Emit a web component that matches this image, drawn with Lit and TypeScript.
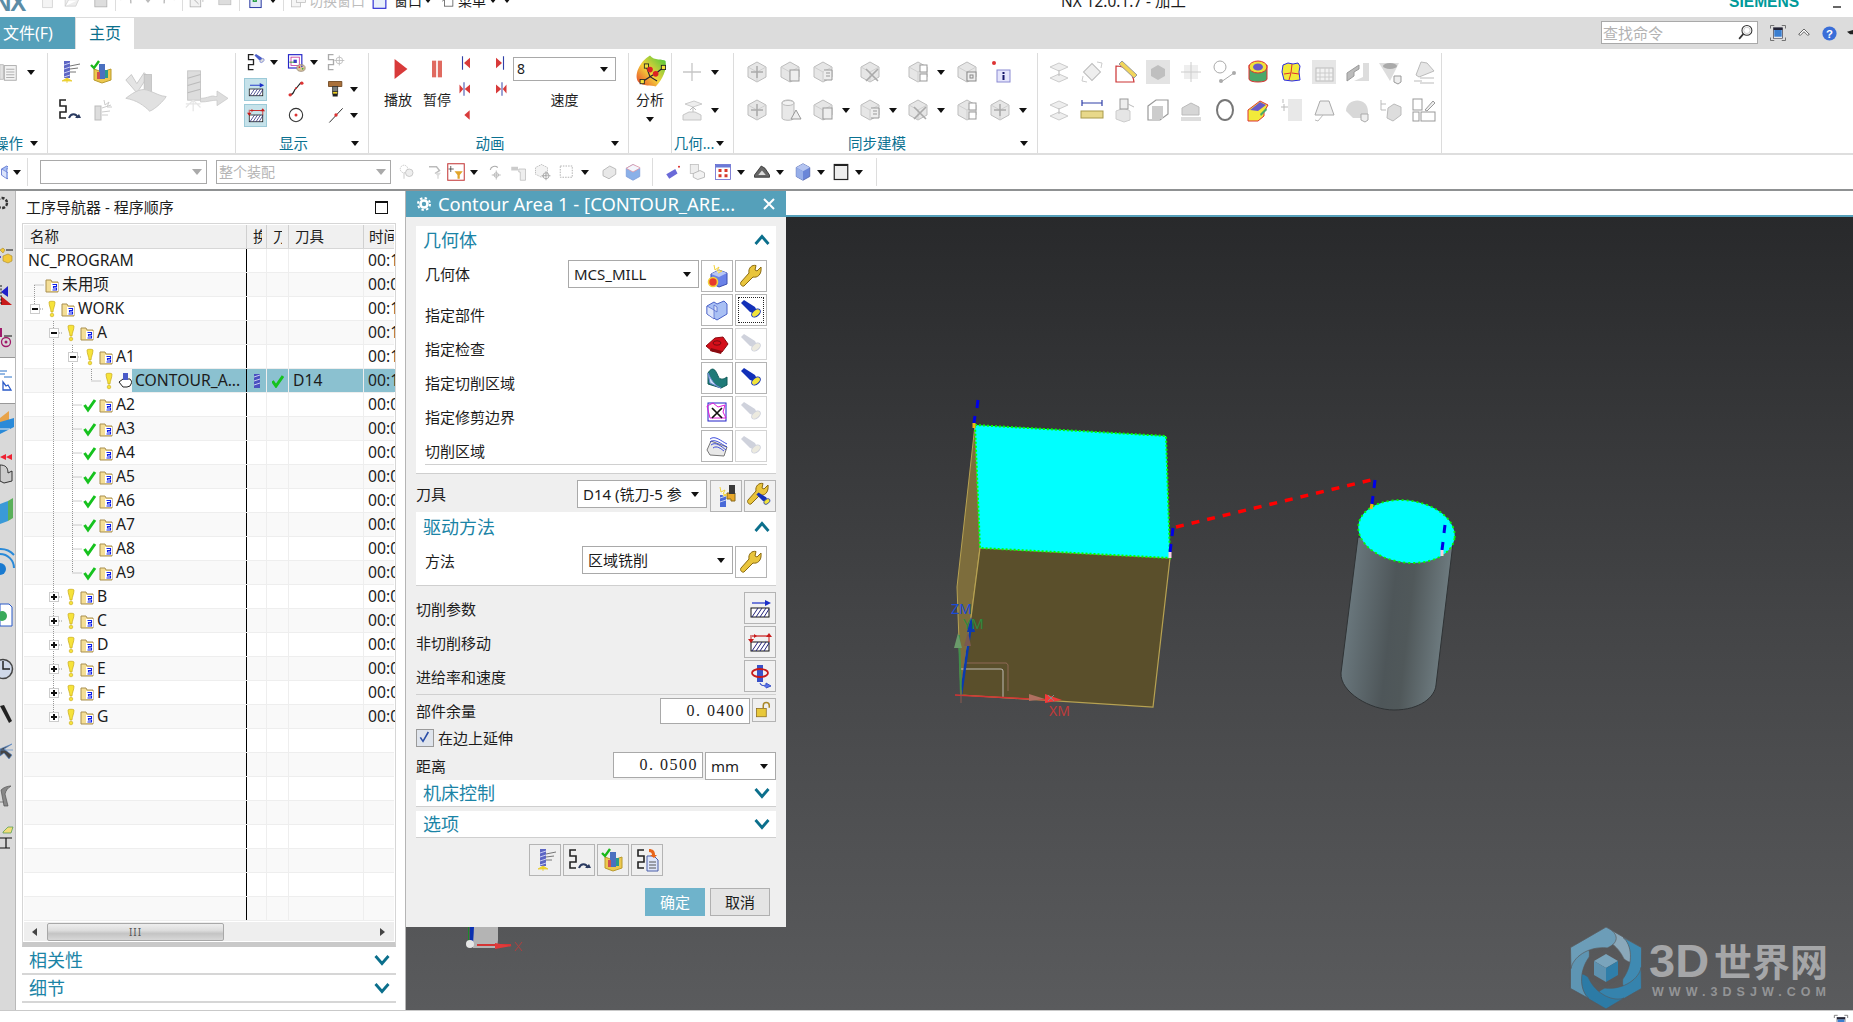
import { LitElement, html, css, svg } from "lit";
import { customElement } from "lit/decorators.js";

const cubeF = (extra: any = "") => svg`<path d="M12 2l9 5v10l-9 5-9-5V7z" fill="#e6e6e6" stroke="#bdbdbd"/><path d="M3 7l9 5 9-5M12 12v10" fill="none" stroke="#cfcfcf"/>${extra}`;
const sPath = (c = "#222") => svg`<path d="M9 2H3v6h6v6H3v6h6" fill="none" stroke="${c}" stroke-width="1.6"/>`;
const hatch = svg`<rect x="3" y="12" width="18" height="9" fill="#fff" stroke="#111"/><path d="M4 21l6-9M8 21l6-9M12 21l6-9M16 21l5-8" stroke="#23237a"/>`;
const torch = (a = "#1230b8", b = "#f1e33a") => svg`<path d="M2 5l3-3 11 7 4 8-9-3z" fill="${a}"/><ellipse cx="17" cy="15" rx="5" ry="3.2" transform="rotate(-40 17 15)" fill="${b}" stroke="${a}"/>`;
const wrench = (c = "#e9c53c") => svg`<path d="M22 3l-4 4-2-1 1-4.500C13 .5 9 4 10 9L2 18c-1.500 2 1 5 3 4l9-9c4 1 9-2 8-10z" fill="${c}" stroke="#8a6a12"/>`;
const folder = svg`<path d="M1 3h5l1 2h6v10H1z" fill="#f4de97" stroke="#a98f4e"/><rect x="6" y="6" width="7" height="8" fill="#fff"/><path d="M7.500 7.500h4v2h-3V11h3v2h-4" fill="none" stroke="#1020e8" stroke-width="1.100"/>`;
const millB = svg`<rect x="7" y="1" width="6" height="17" fill="#5d66c4"/><path d="M7 5l6-2M7 9l6-2M7 13l6-2M7 17l6-2" stroke="#c9cdf2"/><path d="M13 6l10-2M13 9l8-1M13 12l6 0" stroke="#777"/><path d="M10 18l-5 3h10zM10 23v-5" fill="#f2dd3a" stroke="#e7c61f" stroke-width=".7"/>`;
const verify = svg`<path d="M4 9l8 3 9-3v11l-9 3-8-3z" fill="#edc84e" stroke="#b99a2d"/><rect x="9" y="4" width="6" height="15" fill="#4a70c0"/><rect x="15" y="10" width="3" height="8" fill="#2a9a8a"/><rect x="7" y="12" width="3" height="7" fill="#d05050"/><path d="M1 5l3 3 5-7" fill="none" stroke="#1ab81a" stroke-width="2.400"/>`;

const I: Record<string, any> = {
  doc: svg`<path d="M3 4h4v16H3z" fill="#e2e2e2" stroke="#bbb"/><rect x="8" y="5" width="13" height="16" fill="#f3f3f3" stroke="#aaa"/><path d="M10 9h9M10 12h9M10 15h9M10 18h9" stroke="#aaa"/>`,
  mill: millB,
  verify,
  spath: svg`${sPath()}<path d="M12 20c2-5 7-5 9 0" fill="none" stroke="#2a3a60" stroke-width="2"/><path d="M18 20h6l-2-4z" fill="#2a3a60"/>`,
  sparkF: svg`<rect x="5" y="8" width="6" height="14" fill="#ddd" stroke="#bbb"/><path d="M12 10l9-3M12 14l8-1M12 17h6M14 2l1 5 4-3-2 5 5 0" stroke="#ccc" fill="none"/>`,
  bigCheck: svg`<path d="M1 6l3-3 3 5 4-6 2 2-6 9z" fill="#e4e4e4" stroke="#c6c6c6" stroke-width=".5"/><rect x="11" y="3" width="4" height="11" fill="#cfcfcf" stroke="#bbb" stroke-width=".4"/><path d="M1 16c5-4 9-6 13-4 3 1 6 3 9 3-1 2-6 7-9 8-3-3-7-6-13-7z" fill="#e1e1e1" stroke="#c9c9c9" stroke-width=".5"/>`,
  bigMill: svg`<rect x="2" y="1" width="7" height="16" fill="#ddd" stroke="#c4c4c4" stroke-width=".5"/><path d="M2 5l7-2M2 9l7-2M2 13l7-2" stroke="#bbb" stroke-width=".6"/><path d="M9 16c4 0 6-2 8-1h1v-3l6 4-6 4v-3c-3 0-5 1-9 1z" fill="#dedede" stroke="#c8c8c8" stroke-width=".4"/><path d="M5 17l-4 4M5 17l4 4M5 17v6M1 19l8 0" stroke="#e6e6e6" stroke-width=".7"/>`,
  storch: svg`${sPath()}<g transform="translate(9 0) scale(.6)">${torch("#4a5dc8", "#ddd")}</g>`,
  colorsq: svg`<rect x="3" y="2" width="16" height="16" fill="#fff" stroke="#2626c8" stroke-width="1.400"/><rect x="6" y="5" width="10" height="10" fill="#fff" stroke="#c83a9a"/><rect x="9" y="8" width="4" height="4" fill="#3a3ac8"/><path d="M4 11h6" stroke="#1a9a1a"/><ellipse cx="18" cy="18" rx="5" ry="4" fill="#d8c49a" stroke="#987"/><circle cx="16" cy="17" r="1" fill="#d33"/><circle cx="19" cy="16" r="1" fill="#33c"/><circle cx="20" cy="19" r="1" fill="#3a3"/>`,
  sF: svg`${sPath("#aaa")}<circle cx="16" cy="9" r="4" fill="none" stroke="#bbb"/><path d="M16 3v12M10 9h12" stroke="#bbb"/>`,
  cut: svg`${hatch}<path d="M4 7h14" stroke="#1a2ec8" stroke-width="1.200"/><path d="M23 7l-6-3v6z" fill="#1a2ec8"/>`,
  noncut: svg`${hatch}<path d="M4 6h16" stroke="#c81a1a" stroke-width="1.200"/><path d="M3 5v7M21 5v7" stroke="#c81a1a"/><path d="M0 9h6l-3 4zM18 7h6l-3-4zM9 6l-3-2v4z" fill="#c81a1a"/>`,
  curve: svg`<path d="M5 19c5 0 4-6 7-8s4-6 7-7" fill="none" stroke="#222" stroke-width="1.400"/><circle cx="5" cy="19" r="2" fill="#d33"/><circle cx="19" cy="5" r="2" fill="#d33"/><circle cx="12" cy="11" r="1.200" fill="#d33"/>`,
  holder: svg`<path d="M3 3h16v6H3z" fill="#a9703a" stroke="#6a421c"/><rect x="8" y="9" width="6" height="6" fill="#7a7f7f" stroke="#333"/><rect x="8" y="15" width="6" height="3" fill="#f0d21f" stroke="#333"/><rect x="8" y="18" width="6" height="3" fill="#222"/>`,
  circle: svg`<circle cx="12" cy="12" r="8" fill="none" stroke="#333" stroke-width="1.300"/><circle cx="12" cy="12" r="1.800" fill="#d33"/>`,
  line: svg`<path d="M4 21L20 4" stroke="#333" stroke-width="1.200"/><circle cx="12" cy="12" r="2" fill="#d33"/>`,
  play: svg`<path d="M5 1l14 11-14 11z" fill="#d83a3a"/>`,
  pause: svg`<rect x="6" y="2" width="5" height="20" fill="#e06a60"/><rect x="13" y="2" width="5" height="20" fill="#e06a60"/>`,
  first: svg`<path d="M6 3v18" stroke="#3040a8" stroke-width="1.500"/><path d="M8 12l8-7v14z" fill="#d83a3a"/>`,
  last: svg`<path d="M18 3v18" stroke="#3040a8" stroke-width="1.500"/><path d="M16 12L8 5v14z" fill="#d83a3a"/>`,
  stepb: svg`<path d="M8 3v18" stroke="#3040a8" stroke-width="1.300"/><path d="M7 12l-5-6v12zM9 12l7-6v12z" fill="#d83a3a"/>`,
  stepf: svg`<path d="M16 3v18" stroke="#3040a8" stroke-width="1.300"/><path d="M17 12l5-6v12zM15 12L8 6v12z" fill="#d83a3a"/>`,
  back: svg`<path d="M8 12l8-7v14z" fill="#d83a3a"/>`,
  analysis: svg`<defs><linearGradient id="an" x1="0" y1="1" x2="1" y2="0"><stop offset="0" stop-color="#e83a2a"/><stop offset=".45" stop-color="#f4d23a"/><stop offset="1" stop-color="#3ac83a"/></linearGradient></defs><path d="M12 1c3 4 9 2 11 4 1 6-2 13-7 18-3-1-9 0-12-3C0 15 5 5 12 1z" fill="url(#an)"/><path d="M9 8l3 8 5 3M12 16l5-3 5-4M12 16l-6 4" fill="none" stroke="#223" stroke-width=".8"/><g fill="#f2e23a" stroke="#222" stroke-width=".6"><rect x="8" y="7" width="3" height="3"/><rect x="5" y="18" width="3" height="3"/><rect x="20" y="8" width="3" height="3"/></g><circle cx="12" cy="11" r="2" fill="#d22"/><circle cx="16" cy="14" r="2" fill="#d22"/>`,
  plusF: svg`<path d="M12 3v18M3 12h18" stroke="#c6c6c6" stroke-width="1.300"/>`,
  extrudeF: svg`<path d="M5 6l9-3 8 3-9 3z" fill="#eee" stroke="#ccc"/><path d="M13 17V9m-3 3l3-3 3 3" fill="none" stroke="#bbb"/><path d="M3 17l6-3h6l6 3v5H3z" fill="#e8e8e8" stroke="#c6c6c6"/>`,
  c1: cubeF(svg`<path d="M12 6v12M6 12h12" stroke="#aaa" stroke-width="1.500"/>`),
  c2: cubeF(svg`<rect x="12" y="10" width="9" height="11" fill="#eee" stroke="#999"/>`),
  c3: cubeF(svg`<path d="M13 10h8v10h-8" fill="#eee" stroke="#999"/><path d="M15 13h4M15 16h4" stroke="#999"/>`),
  c4: cubeF(svg`<path d="M8 9l12 12M20 9L8 21" stroke="#aaa" stroke-width="1.600"/>`),
  c5: cubeF(svg`<rect x="14" y="5" width="7" height="7" fill="#fff" stroke="#999"/><rect x="14" y="14" width="7" height="7" fill="#fff" stroke="#999"/>`),
  c6: cubeF(svg`<rect x="12" y="12" width="9" height="9" fill="#eee" stroke="#888"/><rect x="15" y="15" width="3" height="3" fill="none" stroke="#888"/>`),
  info: svg`<circle cx="6" cy="3" r="2" fill="#d33"/><rect x="9" y="10" width="13" height="12" fill="#e4e4fb" stroke="#8a8ad2"/><rect x="14.500" y="12" width="2" height="2" fill="#15156a"/><rect x="14.500" y="15" width="2" height="5" fill="#15156a"/>`,
  cylF: svg`<path d="M4 5c0-4 12-4 12 0v15c0 3-12 3-12 0z" fill="#e8e8e8" stroke="#bbb"/><ellipse cx="10" cy="5" rx="6" ry="2.500" fill="#f2f2f2" stroke="#bbb"/><path d="M18 12l5 9h-10z" fill="#eee" stroke="#999"/>`,
  planeF: svg`<path d="M3 7l9-4 9 4-9 4z" fill="#eee" stroke="#ccc"/><path d="M3 18l9-4 9 4-9 4z" fill="#eee" stroke="#ccc"/><path d="M12 10v6" stroke="#bbb"/>`,
  diaF: svg`<rect x="6" y="6" width="12" height="12" fill="#eee" stroke="#bbb" transform="rotate(45 12 12)"/><path d="M17 2l5 1-1 5M7 22l-5-1 1-5" fill="none" stroke="#ccc"/>`,
  ruler: svg`<path d="M3 22V6c9 0 17 7 18 16z" fill="none" stroke="#cc3333" stroke-width="1.200"/><path d="M9 1l15 14-3 3L6 4z" fill="#f1d55a" stroke="#999"/>`,
  boxG: svg`<rect width="24" height="24" fill="#e3e3e3"/><path d="M12 5l7 4v7l-7 4-7-4V9z" fill="#bfbfbf"/>`,
  crossF: svg`<rect x="5" y="5" width="14" height="14" fill="#eee"/><path d="M12 2v20M2 12h20" stroke="#ccc"/>`,
  circL: svg`<circle cx="7" cy="7" r="6" fill="none" stroke="#aaa"/><path d="M8 22l13-9" stroke="#aaa"/><circle cx="8" cy="21" r="2" fill="#aaa"/><circle cx="21" cy="13" r="2" fill="#aaa"/>`,
  ring: svg`<ellipse cx="12" cy="12" rx="8" ry="10" fill="none" stroke="#777" stroke-width="2"/>`,
  rule2: svg`<path d="M2 5h20M2 2v6M22 2v6" stroke="#3040a8" stroke-width="1.200"/><rect x="1" y="13" width="22" height="7" fill="#e8d88a" stroke="#a99a4a"/>`,
  infoF: svg`<path d="M3 13l8-3 6 3v9l-6 2-8-3z" fill="#e5e5e5" stroke="#ccc"/><rect x="7" y="1" width="8" height="10" fill="#eee" stroke="#999"/><path d="M15 6l6 3" stroke="#bbb"/>`,
  wire: svg`<path d="M2 8l8-6h12v14l-8 6H2z" fill="none" stroke="#999" stroke-width="1.200"/><rect x="6" y="8" width="11" height="13" fill="#ccc"/>`,
  dimF: svg`<path d="M3 10l9-5 8 4v8H3z" fill="#d6d6d6" stroke="#bbb"/><rect x="2" y="19" width="20" height="4" fill="#ddd"/>`,
  cyl: svg`<path d="M3 5v14c0 4 18 4 18 0V5z" fill="#4aa86a" stroke="#d33"/><ellipse cx="12" cy="7" rx="9" ry="6" fill="#f0e23a" stroke="#d33"/><ellipse cx="12" cy="7" rx="5" ry="3.500" fill="#6a5ac8"/>`,
  yellowP: svg`<path d="M4 5l5-2 5 1 5-1 2 3-1 6 1 8-8 1-8-1-2-8z" fill="#f2ea3a" stroke="#2a2ae0"/><path d="M5 14l7-1 1-9M13 13l7 1M12 13l-2 7" fill="none" stroke="#d33"/>`,
  stepC: svg`<path d="M2 12l12-9 8 4-4 7v4l-6 5H2z" fill="#f2ea3a" stroke="#d33"/><path d="M4 12l10-8 6 3-8 6z" fill="#6a5ac8"/><path d="M14 16l6-6 1 2-6 6z" fill="#4aa86a"/>`,
  tableF: svg`<rect width="24" height="24" fill="#e6e6e6"/><rect x="4" y="8" width="17" height="13" fill="#f2f2f2" stroke="#bbb"/><path d="M8 8v13M13 8v13M17 8v13M4 13h17M4 17h17" stroke="#ccc"/>`,
  stairF: svg`<path d="M2 13l12-8v4l-5 3v4l-7 5z" fill="#bbb" stroke="#999"/><path d="M9 21l9-4V3h6v18z" fill="#ddd"/>`,
  funnelF: svg`<path d="M1 3h20l-9 18z" fill="#ddd"/><ellipse cx="12" cy="6" rx="7" ry="3" fill="#aaa"/><path d="M16 16h7v6l-3 2-4-2z" fill="#eee" stroke="#999"/>`,
  lampF: svg`<path d="M4 15L9 2l6 1 7 8-15 6z" fill="#e6e6e6" stroke="#bbb"/><path d="M2 21h8M8 18h14M8 23h14" stroke="#bbb"/>`,
  machF: svg`<rect x="9" y="1" width="14" height="22" fill="#e8e8e8"/><path d="M2 9h7M5 6v7M4 1v4" stroke="#bbb"/>`,
  trapF: svg`<path d="M8 3h9l5 14H3z" fill="#eee" stroke="#aaa"/><path d="M3 22l3 1 5-6" fill="none" stroke="#bbb"/>`,
  domeF: svg`<path d="M1 13C1 0 23-2 23 14v6H8z" fill="#d8d8d8"/><path d="M16 16h7v6l-3 2-4-2z" fill="#eee" stroke="#aaa"/>`,
  treeF: svg`<path d="M3 2v10M3 6h5M3 12h5" stroke="#bbb" fill="none"/><path d="M10 10l6-4 7 3v8l-8 6-6-3z" fill="#ddd" stroke="#bbb"/>`,
  layoutF: svg`<rect x="1" y="1" width="9" height="11" fill="#fff" stroke="#999"/><rect x="1" y="14" width="6" height="9" fill="#fff" stroke="#999"/><rect x="9" y="14" width="14" height="9" fill="#fff" stroke="#999"/><path d="M13 12l8-9 2 2-8 8z" fill="#eee" stroke="#999"/>`,
  wnd: svg`<rect x="3" y="1" width="18" height="22" fill="#e8f0fa" stroke="#1a1ad0" stroke-width="1.500"/>`,
  menu: svg`<rect x="9" y="2" width="12" height="18" fill="#fff" stroke="#444"/><path d="M2 9h10M6 5l5 4-5 4" stroke="#333" fill="none"/>`,
  fileF: svg`<path d="M5 2h10l4 4v16H5z" fill="#f4f4f4" stroke="#ccc"/>`,
  openF: svg`<path d="M3 20V5h7l2 2h8v4H8l-5 9h15l4-9" fill="#eee" stroke="#ccc"/>`,
  saveF: svg`<rect x="4" y="3" width="17" height="18" fill="#ddd" stroke="#aaa"/><rect x="8" y="3" width="9" height="7" fill="#f5f5f5"/>`,
  undoF: svg`<path d="M5 9c6-6 14-3 13 7" fill="none" stroke="#bbb" stroke-width="2"/><path d="M2 5l7 1-5 6z" fill="#bbb"/>`,
  redoF: svg`<path d="M19 9C13 3 5 6 6 16" fill="none" stroke="#bbb" stroke-width="2"/><path d="M22 5l-7 1 5 6z" fill="#bbb"/>`,
  cutF: svg`<rect x="3" y="6" width="15" height="15" fill="#f2f2f2" stroke="#aaa"/><path d="M9 2h12v12" fill="none" stroke="#aaa"/><path d="M8 10l7 7" stroke="#999"/>`,
  printF: svg`<rect x="4" y="9" width="17" height="9" fill="#ddd" stroke="#bbb"/><rect x="7" y="3" width="11" height="6" fill="#f2f2f2" stroke="#ccc"/>`,
  blueDoc: svg`<rect x="4" y="2" width="16" height="20" fill="#e2e8f8" stroke="#1a2a9a" stroke-width="1.300"/><path d="M8 8l6 0v6l-6 0z" fill="#1d9a3a"/><path d="M10 10h2v2h-2z" fill="#fff"/>`,
  windows: svg`<rect x="2" y="7" width="13" height="14" fill="#f5f5f5" stroke="#bbb"/><rect x="9" y="2" width="13" height="13" fill="#f5f5f5" stroke="#bbb"/>`,
  search: svg`<circle cx="14" cy="9" r="7" fill="#fff" stroke="#333" stroke-width="1.500"/><circle cx="14" cy="9" r="4.500" fill="none" stroke="#bbb"/><path d="M9 14l-6 7" stroke="#333" stroke-width="2.400"/>`,
  frame: svg`<path d="M2 6V2h5M17 2h5v4M22 18v4h-5M7 22H2v-4" fill="none" stroke="#666" stroke-width="1.200"/><rect x="6" y="5" width="12" height="14" fill="#fff" stroke="#445"/><rect x="7" y="8" width="10" height="9" fill="#3a7ed0"/><rect x="6" y="5" width="12" height="3" fill="#223"/>`,
  caret: svg`<path d="M4 14l8-8 8 8-2.500 1.500L12 10l-5.500 5.500z" fill="#fff" stroke="#222" stroke-width="1"/>`,
  help: svg`<circle cx="12" cy="12" r="10" fill="#3a6ed8"/><text x="12" y="18" text-anchor="middle" font-size="16" font-weight="700" fill="#fff" font-family="Liberation Sans">?</text>`,
  pin: svg`<path d="M0 9l14-4v8H5z" fill="#222"/>`,
  filter: svg`<rect x="1" y="1" width="22" height="22" fill="#fff" stroke="#c43a3a" stroke-width="1.400"/><path d="M5 4v8M2 8h7" stroke="#333"/><path d="M10 11h11l-4 5v5h-3v-5z" fill="#e2a42a"/>`,
  selA: svg`<circle cx="8" cy="8" r="5" fill="none" stroke="#bbb" stroke-dasharray="2 1"/><circle cx="15" cy="13" r="5" fill="#eee" stroke="#bbb"/><path d="M8 13v8" stroke="#bbb"/>`,
  selB: svg`<path d="M4 5h10l4 5-6 4" fill="none" stroke="#bbb" stroke-width="2"/><path d="M12 13h8l-3 4v4h-2v-4z" fill="#ddd"/>`,
  selC: svg`<path d="M7 9a6 6 0 0 1 10-3" fill="none" stroke="#aaa" stroke-width="1.500"/><path d="M15 10v12M9 16h12" stroke="#aaa"/><circle cx="15" cy="16" r="3" fill="none" stroke="#aaa"/>`,
  selD: svg`<path d="M3 5h9v5H3z" fill="#ccc"/><path d="M13 8h9v15h-7V12h-2z" fill="#eee" stroke="#bbb"/>`,
  selE: svg`<path d="M10 2l8 4v9l-8 4-8-4V6z" fill="#f3f3f3" stroke="#aaa" stroke-dasharray="1.500 1"/><circle cx="16" cy="17" r="4" fill="none" stroke="#999"/><path d="M16 11v12M10 17h12" stroke="#999"/>`,
  selF: svg`<rect x="3" y="4" width="16" height="15" fill="none" stroke="#999" stroke-dasharray="2 1.500"/>`,
  selG: svg`<path d="M4 10l9-6 8 4v7l-9 6-8-4z" fill="#e8e8e8" stroke="#aaa"/>`,
  cubeBlue: svg`<path d="M12 2l9 5v11l-9 5-9-5V7z" fill="#8ab0e8" stroke="#7a9ad8"/><path d="M3 7l9 5 9-5v-1l-9-4-9 5" fill="#f3f6fc" stroke="#e090a0"/>`,
  paint: svg`<path d="M3 15l12-7 3 6-11 7z" fill="#6a6ad8"/><circle cx="20" cy="5" r="1.400" fill="#d33"/>`,
  listF: svg`<rect x="3" y="2" width="11" height="12" fill="#eee" stroke="#bbb"/><path d="M7 14l9-4 6 3v6l-9 3-6-3z" fill="#f2f2f2" stroke="#aaa"/>`,
  tblC: svg`<rect x="2" y="2" width="20" height="20" fill="#fff" stroke="#5a5ac8"/><rect x="2" y="2" width="20" height="4" fill="#6a7ad8"/><g fill="#d83a2a"><rect x="6" y="8" width="4" height="4"/><rect x="14" y="8" width="4" height="4"/><rect x="6" y="15" width="4" height="4"/><rect x="14" y="15" width="4" height="4"/></g>`,
  shade: svg`<path d="M2 16l9-12 5 3 6 9v3H2z" fill="#666" stroke="#222"/><path d="M7 16l5-6 5 6z" fill="#ddd"/>`,
  cube3: svg`<path d="M12 1l9 5v12l-9 5-9-5V6z" fill="#6a86d8" stroke="#4a5ea8"/><path d="M3 6l9 5 9-5-9-5z" fill="#b4c4f0"/><path d="M12 11v12L3 18V6z" fill="#96aee8"/>`,
  square: svg`<rect x="3" y="2" width="18" height="20" fill="#eee" stroke="#222" stroke-width="1.600"/><rect x="3" y="2" width="18" height="2" fill="#222"/>`,
  geoNew: svg`<path d="M6 10l8-4 8 3v11l-8 3-8-4z" fill="#6a82e8" stroke="#3a4eb0"/><path d="M6 10l8 3 8-4-8-3z" fill="#b8c6f4"/><circle cx="8" cy="18" r="4.500" fill="#e83a2a" stroke="#f2d23a" stroke-width="1.600"/><path d="M9 1l1 5 4-3-2 4 5 0-4 2" stroke="#f2d23a" fill="#fff"/>`,
  wrench: wrench(),
  part: svg`<path d="M2 8l7-4 3 2 7-3 3 3v10l-10 6L2 16z" fill="#a9c0f4" stroke="#4a62c8"/><path d="M9 7l3 2v5l-3-2zM2 8l7 4v9l-7-5z" fill="#dbe4fb" stroke="#4a62c8" stroke-width=".7"/>`,
  torch: torch(),
  torchF: torch("#cfd2dc", "#eceadf"),
  chk: svg`<path d="M1 14l9-8 8-1 5 7-6 8-10-1z" fill="#d40f1a" stroke="#8a0a10"/><path d="M6 16l11 3-1 3-11-3z" fill="#8a0a10"/><ellipse cx="12" cy="11" rx="4" ry="2.200" fill="none" stroke="#7a0a10"/>`,
  area: svg`<path d="M3 7c5-8 8-2 10 3s6 3 9 1v8l-6 3-13-4z" fill="#1e7a78" stroke="#0f5a58"/><path d="M3 7l2 10 11 5c-4-1-9-6-13-15z" fill="#cfe0f8" stroke="#6a8ad0"/>`,
  trim: svg`<rect x="3" y="3" width="18" height="18" fill="#fff" stroke="#2020c8"/><path d="M2 6l6-3 5 4 7-2-2 7 3 6H5z" fill="none" stroke="#e01ad8"/><path d="M7 8l10 10M17 8L7 18" stroke="#111" stroke-width="1.700"/>`,
  region: svg`<path d="M2 16l4-9 16 6-3 9-14-1z" fill="#e8e8e8" stroke="#777"/><path d="M5 5c5-4 11 2 17 5M5 8c5-4 11 2 17 5M6 11c5-4 11 2 15 5M8 14c4-3 8 1 11 3" fill="none" stroke="#2a3ad8" stroke-width=".9"/>`,
  toolNew: svg`<rect x="6" y="11" width="6" height="12" fill="#4a6ad8"/><path d="M6 14l6-2M6 18l6-2" stroke="#c8d2f4"/><path d="M13 9h8v8h-4v-2h-4z" fill="#e8a82a" stroke="#8a6a1a"/><rect x="15" y="1" width="6" height="9" fill="#3a3a3a"/><path d="M6 3l1 5 4-2-2 4 4 1-4 1" stroke="#f2d23a" fill="#fff"/>`,
  toolW: svg`<g transform="translate(-2 -2)">${wrench()}</g><g transform="translate(7 7) scale(.7)">${torch()}</g>`,
  feeds: svg`<rect x="9" y="1" width="6" height="17" fill="#3a52c8"/><ellipse cx="12" cy="9" rx="8" ry="4" fill="none" stroke="#c81a1a" stroke-width="1.800"/><path d="M12 19c1 4 5 2 6 2v-2l5 3-5 2" fill="#5a72e8" stroke="#3a52c8"/>`,
  doc2: svg`${sPath()}<path d="M12 8h7l4 4v11H12z" fill="#dfe6fa" stroke="#4a5ea8"/><path d="M14 14h7M14 17h7M14 20h7" stroke="#555"/><path d="M14 1c4 0 6 2 6 6h2l-3 3-4-3h2c0-2-1-3-3-3z" fill="#e8641a"/>`,
  lock: svg`<rect x="2" y="10" width="13" height="11" fill="#e8c83a" stroke="#8a6a1a"/><path d="M11 10V6a4 4 0 0 1 8 0v3" fill="none" stroke="#a9882a" stroke-width="2"/>`,
  chkbox: svg`<path d="M5 11l4 6 8-14" fill="none" stroke="#2a4ea8" stroke-width="2.400"/>`,
  bulb: svg`<path d="M2 0c0-1 6-1 6 0 0 4-2 7-2 10H4C4 7 2 4 2 0z" fill="#f6e33a" stroke="#c9a91a" stroke-width=".7"/><circle cx="5" cy="13" r="1.800" fill="#f6e33a" stroke="#c9a91a" stroke-width=".6"/>`,
  okg: svg`<path d="M.5 7l3.500 5L11 2" fill="none" stroke="#16c21e" stroke-width="3"/>`,
  op: svg`<path d="M1 9l4-3h7l2 3-2 4-3 1H5z" fill="#fff" stroke="#222"/><rect x="5" y="0" width="5" height="7" fill="#4a5ac8"/>`,
  folder,
  hatchV: svg`<rect x="1" y="0" width="6" height="14" fill="#4a50c0"/><path d="M1 3l6-2M1 7l6-2M1 11l6-2" stroke="#c8ccf0"/>`,
};

const ic = (n: string, s = 24, vb = "0 0 24 24") => html`<svg class="i" width=${s} height=${s} viewBox=${vb} aria-hidden="true">${I[n]}</svg>`;
const arrow = html`<span class="ar"></span>`;

type Row = { l?: number; exp?: string; mark?: string; kind?: string; t?: string; time?: string; pad?: number; g?: any; sel?: boolean };
const A = (t: string): Row => ({ l: 3, mark: "okg", kind: "folder", t, time: "00:00:49", g: svg`<path d="M52.500 0v24M71.500 0v${t === "A9" ? 12 : 24}M71.500 12h10"/>` });
const B = (t: string): Row => ({ l: 2, exp: "+", mark: "bulb", kind: "folder", t, time: "00:05:12", g: svg`<path d="M52.500 0v${t === "G" ? 12 : 24}M58 12h4"/>` });
const rows: Row[] = [
  { t: "NC_PROGRAM", pad: 4, time: "00:19:22" },
  { kind: "folder", t: "未用项", pad: 21, time: "00:00:00", g: svg`<path d="M33.500 12v12M33.500 12h10"/>` },
  { l: 1, exp: "-", mark: "bulb", kind: "folder", t: "WORK", time: "00:19:22", g: svg`<path d="M33.500 0v7M39 12h4"/>` },
  { l: 2, exp: "-", mark: "bulb", kind: "folder", t: "A", time: "00:12:05", g: svg`<path d="M52.500 0v24M58 12h4"/>` },
  { l: 3, exp: "-", mark: "bulb", kind: "folder", t: "A1", time: "00:10:11", g: svg`<path d="M52.500 0v24M71.500 0v24M77 12h4"/>` },
  { l: 4, mark: "bulb", kind: "op", t: "CONTOUR_A...", sel: true, time: "00:10:11", g: svg`<path d="M52.500 0v24M71.500 0v24M90.500 0v12M90.500 12h10"/>` },
  ...["A2", "A3", "A4", "A5", "A6", "A7", "A8", "A9"].map(A),
  ...["B", "C", "D", "E", "F", "G"].map(B),
  ...Array.from({ length: 8 }, () => ({} as Row)),
];

const g8a = ["planeF", "diaF", "ruler", "boxG", "crossF", "circL", "cyl", "yellowP", "tableF", "stairF", "funnelF", "lampF"];
const g8b = ["planeF", "rule2", "infoF", "wire", "dimF", "ring", "stepC", "machF", "trapF", "domeF", "treeF", "layoutF"];
const g7a: [string, boolean][] = [["c1", false], ["c2", false], ["c3", false], ["c4", false], ["c5", true], ["c6", false], ["info", false]];
const g7b: [string, boolean][] = [["c1", false], ["cylF", false], ["c2", true], ["c3", true], ["c4", true], ["c5", false], ["c1", true]];
const selItems: [string, number, boolean][] = [["selA", 28, false], ["selB", 21, false], ["filter", 38, true], ["selC", 24, false], ["selD", 25, false], ["selE", 24, false], ["selF", 42, true], ["selG", 24, false], ["cubeBlue", 28, false]];
const selItems2: [string, number, boolean][] = [["paint", 24, false], ["listF", 26, false], ["tblC", 39, true], ["shade", 41, true], ["cube3", 38, true], ["square", 44, true]];
const topItems: [number, any][] = [
  [47, ic("fileF", 17)], [71, ic("openF", 17)], [100, ic("saveF", 17)], [115, html`<span class="tsep"></span>`],
  [126, ic("undoF", 17)], [148, html`<span class="ar" style="border-top-color:#bbb"></span>`], [168, ic("redoF", 17)], [182, html`<span class="tsep"></span>`],
  [196, ic("cutF", 17)], [224, ic("printF", 17)], [239, html`<span class="tsep"></span>`], [255, ic("blueDoc", 17)], [273, arrow], [283, html`<span class="tsep"></span>`],
  [298, ic("windows", 17)], [337, html`<span class="tt gray">切换窗口</span>`], [379, ic("wnd", 17)], [408, html`<span class="tt">窗口</span>`], [428, arrow],
  [446, ic("menu", 17)], [472, html`<span class="tt">菜单</span>`], [493, arrow], [507, arrow],
];
const sideTop: [number, any][] = [
  [0, svg`<circle cx="2" cy="12" r="5" fill="none" stroke="#333" stroke-width="2.400" stroke-dasharray="3 1.500"/>`],
  [51, svg`<path d="M0 8l3-2 2 2-2 3zM3 14l5-2 4 2v5l-4 2-5-2z" fill="#f2c83a" stroke="#a9882a" stroke-width=".6"/><path d="M6 8h7" stroke="#111"/><circle cx="0" cy="15" r="1" fill="#22c"/>`],
  [91, svg`<path d="M8 4L1 10l7 5z" fill="#2020c8"/><path d="M1 14l11 9H1z" fill="#c81a1a"/><path d="M1 3v20" stroke="#111" stroke-dasharray="2 1.400"/>`],
  [133, svg`<rect x="0" y="4" width="2" height="9" fill="#a01a6a"/><path d="M4 12h8" stroke="#111"/><circle cx="6" cy="18" r="4.500" fill="none" stroke="#a01a6a" stroke-width="1.300"/><circle cx="6" cy="18" r="1.500" fill="#a01a6a"/>`],
];
const blades = [
  ["0", "#8aa8ba"], ["60", "#3f8ab2"], ["120", "#3583ad"], ["180", "#2c7ba6"], ["240", "#5e95b3"], ["300", "#6c9db8"],
];

@customElement("app-root")
export class AppRoot extends LitElement {
  static styles = css`
    :host { display: block; width: 1853px; height: 1022px; overflow: hidden; background: #fff; color: #1c1c1c; font: 15px/20px "Noto Sans", "Noto Sans CJK SC", sans-serif; }
    * { box-sizing: border-box; }
    .i { display: block; flex: none; overflow: visible; }
    .ar { display: block; flex: none; width: 0; height: 0; border-left: 4px solid transparent; border-right: 4px solid transparent; border-top: 5px solid #111; }

    .top { height: 17px; display: flex; align-items: center; overflow: hidden; }
    .top > * { margin-top: -16px; flex: none; }
    .nx { width: 30px; font: 700 24px/24px "Liberation Sans", sans-serif; color: #5b8ca6; margin-left: -6px; letter-spacing: -1px; margin-top: -12px !important; }
    .tops { display: flex; align-items: center; width: 1037px; height: 18px; }
    .ti { width: 0; display: flex; justify-content: center; align-items: center; flex: none; }
    .tsep { width: 1px; height: 20px; background: #ddd; flex: none; }
    .tt { font-size: 14px; line-height: 18px; white-space: nowrap; flex: none; }
    .gray { color: #bdbdbd; }
    .title { width: 668px; font-size: 15.4px; line-height: 20px; margin-top: -14px !important; }
    .siemens { width: 104px; font: 700 15.6px/20px "Liberation Sans", sans-serif; color: #009a9a; margin-top: -14px !important; }
    .min { width: 8px; height: 2px; background: #666; margin-top: -3px !important; }

    .tabs { height: 32px; background: #dcdcdc; display: flex; align-items: stretch; }
    .file { width: 75px; background: #55a0ba; color: #fff; font-size: 16px; line-height: 32px; padding-left: 3px; }
    .home { width: 58px; margin: 1px 0 0 1px; background: #fff; color: #0b6f8c; line-height: 31px; text-align: center; font-size: 16px; }
    .tabs .sp { flex: 1; }
    .search { width: 157px; height: 23px; margin: 4px 11px 0 0; border: 1px solid #a9a9a9; background: #fff; display: flex; align-items: center; justify-content: space-between; padding: 0 3px 0 1px; color: #b2b2b2; font-size: 15px; }
    .tbtns { display: flex; align-items: center; gap: 9px; width: 84px; flex: none; }

    .ribbon { height: 106px; display: flex; border-bottom: 2px solid #dedede; overflow: hidden; }
    .grp { flex: none; display: flex; flex-direction: column; margin-top: 4px; height: 100px; border-right: 1px solid #dcdcdc; }
    .gb { height: 80px; flex: none; display: flex; }
    .gl { height: 20px; color: #0b7191; font-size: 14.5px; line-height: 20px; text-align: center; display: flex; align-items: center; justify-content: center; white-space: nowrap; }
    .gl .ar { margin-left: auto; }
    .gl .lab { flex: 1; text-align: center; }
    .c { display: flex; align-items: center; justify-content: center; }
    .two { display: grid; grid-auto-flow: column; grid-template-rows: 38px 38px; }
    .g1 { width: 48px; }
    .g1 .doc { display: flex; height: 38px; align-items: center; gap: 8px; margin-left: -3px; }
    .g1 .gl { justify-content: flex-start; margin-left: -6px; padding-right: 9px; }
    .g2 { width: 188px; }
    .g2 .two { grid-template-columns: 33px 33px; margin-left: 4px; width: 66px; }
    .big { display: flex; align-items: flex-start; padding-top: 16px; margin-left: 6px; gap: 16px; }
    .g3 { width: 133px; }
    .g3 .gb { display: grid; grid-template-columns: repeat(3, 40px); grid-template-rows: 27px 26px 26px; padding: 0 0 0 8px; height: 80px; margin-top: -4px; margin-bottom: 4px; }
    .g3 .cell { display: flex; align-items: center; gap: 3px; }
    .slot23 { width: 23px; height: 23px; display: flex; align-items: center; justify-content: center; flex: none; }
    .on { background: #c6e2ea; border: 1px solid #9ccad8; }
    .g3 .gl { padding-right: 9px; }
    .g4 { width: 260px; }
    .g4 .gb { padding-left: 14px; }
    .g4 .gl { padding-right: 9px; }
    .vb { width: 36px; display: flex; flex-direction: column; align-items: center; font-size: 14px; line-height: 20px; flex: none; }
    .vb .pic { height: 32px; display: flex; align-items: center; }
    .vb .txt { margin-top: 5px; }
    .vb .txt.l { margin-right: 6px; }
    .mini { display: grid; grid-template-columns: 24px 24px; column-gap: 8px; grid-template-rows: 27px 26px 26px; margin-top: -4px; height: 80px; }
    .speed { margin: 4px 0 0 2px; width: 103px; font-size: 14px; text-align: center; flex: none; }
    .combo { height: 24px; border: 1px solid #a9a9a9; background: #fff; display: flex; align-items: center; justify-content: space-between; padding: 0 7px 0 3px; text-align: left; }
    .speed .t { margin-top: 9px; }
    .g5 { width: 43px; align-items: center; }
    .g5 .pic { height: 36px; }
    .g5 .txt { margin-top: 1px; }
    .g5 .ar { margin-top: 7px; }
    .g6 { width: 62px; }
    .g6 .two { grid-template-columns: 62px; padding-left: 8px; }
    .g6 .cell { display: flex; align-items: center; gap: 7px; }
    .g6 .gl { padding: 0 9px 0 0; }
    .g7 { width: 304px; }
    .g7 .two { padding-left: 7px; grid-template-columns: 33px 33px 47px 48px 49px 33px 47px; }
    .g7 .cell { display: flex; align-items: center; }
    .slot32 { width: 32px; display: flex; justify-content: center; margin-right: 3px; flex: none; }
    .g7 .gl { padding-right: 9px; }
    .g8 { width: 404px; }
    .g8 .two { padding-left: 4px; grid-template-columns: repeat(12, 33.2px); }

    .sel { height: 36px; display: flex; align-items: center; border-bottom: 2px solid #8f9192; }
    .sel .vs { width: 1px; height: 28px; background: #ddd; flex: none; }
    .sel .cell { display: flex; align-items: center; justify-content: flex-start; flex: none; }
    .sel .cell .i { width: 18px; height: 18px; }
    .sel .cell .ar { margin-left: 5px; }
    .scombo { height: 24px; border: 1px solid #a9a9a9; background: #fff; display: flex; align-items: center; justify-content: space-between; color: #b5b5b5; font-size: 14px; padding: 0 4px 0 2px; flex: none; }
    .scombo .ar { border-top-color: #aaa; border-left-width: 5px; border-right-width: 5px; border-top-width: 6px; }
    .lead { display: block; width: 8px; overflow: hidden; }
    .lead + .ar { margin-left: 6px; }

    .main { height: 819px; display: flex; }
    .side { width: 16px; flex: none; display: flex; flex-direction: column; border-right: 1px solid #b9b9b9; }
    .sg { background: #d9d9d9; }
    .s1 { height: 167px; border-bottom: 1px solid #999; }
    .sw { height: 45px; background: #fff; padding-top: 10px; }
    .s2 { flex: 1; border-top: 1px solid #999; overflow: hidden; }

    .nav { width: 390px; flex: none; border-right: 1px solid #b5b5b5; padding-left: 6px; display: flex; flex-direction: column; }
    .navt { height: 32px; display: flex; align-items: center; justify-content: space-between; padding: 0 17px 0 4px; font-size: 15px; }
    .maxi { width: 13px; height: 13px; border: 1px solid #111; border-top-width: 2px; }
    .tbl { width: 374px; border: 1px solid #d6d6d6; border-bottom: 0; padding: 1px 1px 0; }
    .hdr { display: grid; grid-template-columns: 222px 20px 22px 75px 32px; height: 24px; background: #f0f0f0; border-bottom: 1px solid #d7d7d7; font-size: 14.5px; line-height: 23px; overflow: hidden; }
    .hdr > div { border-left: 1px solid #d0d0d0; padding-left: 6px; overflow: hidden; white-space: nowrap; }
    .hdr > div:first-child { border: 0; }
    .hdr > .tc { padding-left: 5px; }
    .clip { display: block; width: 9px; overflow: hidden; }
    .row { display: grid; grid-template-columns: 222px 20px 22px 75px 32px; height: 24px; border-bottom: 1px solid #eee; background: #fff; font-size: 15.7px; line-height: 23px; }
    .row.alt { background: #f9f9f9; }
    .row > div { border-left: 1px solid #eee; overflow: hidden; white-space: nowrap; }
    .row > div:first-child { border: 0; position: relative; display: flex; align-items: center; }
    .row > div:nth-child(2) { border-left: 1px solid #000; }
    .row > .tm { padding-left: 4px; }
    .row > .tl { padding-left: 4px; }
    .row > .ctr { display: flex; align-items: center; justify-content: center; }
    .row > .on2 { background: #8bc1d0; }
    .guides { position: absolute; left: -23px; top: 0; width: 245px; height: 24px; fill: none; stroke: #999; stroke-dasharray: 1 1; pointer-events: none; }
    .box { width: 10px; height: 10px; border: 1px solid #ccc; background: #fff; position: relative; flex: none; margin-right: 7px; }
    .box::before { content: ""; position: absolute; left: 1px; top: 3px; width: 6px; height: 2px; background: #111; }
    .box.plus::after { content: ""; position: absolute; left: 3px; top: 1px; width: 2px; height: 6px; background: #111; }
    .bs { width: 10px; height: 10px; flex: none; margin-right: 7px; }
    .mk { width: 10px; flex: none; margin-right: 4px; display: flex; justify-content: center; position: relative; z-index: 1; }
    .kd { width: 14px; flex: none; margin-right: 3px; }
    .nm { position: relative; z-index: 1; }
    .nm.sel2 { flex: 1; background: #8bc1d0; margin-left: -3px; padding-left: 3px; overflow: hidden; height: 23px; }
    .sb { width: 374px; height: 26px; border: 1px solid #d6d6d6; border-top: 0; border-bottom: 5px solid #c9c9c9; padding: 1px; }
    .sbi { height: 19px; background: #eee; display: flex; align-items: center; }
    .tri-l { width: 0; height: 0; border: 4px solid transparent; border-right: 5px solid #444; border-left: 0; margin-left: 8px; }
    .tri-r { width: 0; height: 0; border: 4px solid transparent; border-left: 5px solid #444; border-right: 0; margin-left: auto; margin-right: 9px; }
    .thumb { width: 177px; height: 18px; margin-left: 10px; border: 1px solid #a8a8a8; border-radius: 2px; background: linear-gradient(#eee 0, #ddd 40%, #c4c4c4 60%, #d8d8d8 100%); display: flex; align-items: center; justify-content: center; color: #555; font-size: 10px; letter-spacing: 1px; }
    .acc { width: 374px; height: 28px; border-bottom: 2px solid #d6d6d6; display: flex; align-items: center; justify-content: space-between; padding: 0 6px 0 7px; color: #1b84a6; font-size: 18px; }

    .work { flex: 1; display: grid; grid-template-columns: 380px 1fr; grid-template-rows: 26px 1fr; }
    .strip { grid-column: 2; grid-row: 1; border-bottom: 2px solid #55a0ba; }
    .scene { grid-column: 1 / 3; grid-row: 2; display: block; }
    .dlg { grid-column: 1; grid-row: 1 / 3; height: 736px; background: #efefef; align-self: start; z-index: 1; padding: 0 10px; display: flex; flex-direction: column; }
    .dt { margin: 0 -10px; height: 26px; background: #55a0ba; color: #fff; display: flex; align-items: center; padding: 0 11px 0 10px; font-size: 18.4px; white-space: nowrap; flex: none; }
    .dt .n { margin-left: 6px; flex: 1; overflow: hidden; }
    .sec { background: #fff; border-bottom: 1px solid #cfcfcf; padding: 0 9px 0 7px; flex: none; }
    .sh { display: flex; align-items: center; justify-content: space-between; height: 28px; color: #1b84a6; font-size: 18px; margin-right: -3px; }
    .fr { display: flex; align-items: flex-start; height: 34px; }
    .fr .lb { flex: 1; padding: 11px 0 0 2px; font-size: 15px; }
    .fr .lb.t4 { padding-top: 4px; }
    .fr .lb.t5 { padding-top: 5px; }
    .btn { width: 32px; height: 32px; border: 1px solid #b4b4b4; background: #fff; margin-left: 2px; display: flex; align-items: center; justify-content: center; flex: none; }
    .btn.g { background: #f1f1f1; }
    .btn.dash { position: relative; }
    .btn.dash::after { content: ""; position: absolute; inset: 2px; border: 1px dotted #222; }
    .btn.f { border-color: #d4d4d4; }
    .dd { height: 28px; background: #fff; border: 1px solid #a9a9a9; display: flex; align-items: center; justify-content: space-between; padding: 0 7px 0 5px; font-size: 15px; white-space: nowrap; overflow: hidden; flex: none; }
    .hr { height: 1px; background: #d0d0d0; margin: 0 0 0 2px; }
    .plain { display: flex; align-items: flex-start; height: 34px; font-size: 15px; flex: none; }
    .plain .lb { flex: 1; padding-top: 7px; }
    .plain .lb.t3 { padding-top: 3px; }
    .plain .lb.t4 { padding-top: 4px; }
    .tool { height: 38px; padding-top: 6px; }
    .tool .dd { width: 130px; margin-right: 1px; }
    .gap6 { height: 6px; flex: none; }
    .rule { height: 1px; background: #d0d0d0; margin-bottom: 3px; flex: none; }
    .h26 { height: 26px; }
    .chkrow { height: 18px; margin-top: 5px; align-items: center; }
    .h28 { height: 28px; margin-top: 5px; }
    .num { width: 90px; height: 26px; background: #fff; border: 1px solid #a9a9a9; text-align: right; padding-right: 4px; font: 16px/24px "Liberation Serif", serif; letter-spacing: 1.5px; flex: none; }
    .num.mr { margin-right: 2px; }
    .lockb { width: 24px; height: 24px; border: 1px solid #b4b4b4; margin-left: 2px; display: flex; align-items: center; justify-content: center; flex: none; }
    .ck { width: 18px; height: 18px; border: 1px solid #9a9a9a; background: #dfe4ec; margin-right: 4px; flex: none; display: flex; align-items: center; justify-content: center; }
    .s27 { height: 27px; }
    .s27 .sh { height: 26px; }
    .mt4 { margin-top: 4px; }
    .s1st { margin-top: 9px; height: 248px; }
    .s2nd { height: 74px; }
    .s2nd .sh { height: 30px; }
    .f1 { height: 32px; margin-top: 6px; }
    .f2 { margin-top: 2px; }
    .f3 { height: 36px; margin-top: 4px; }
    .w131 { width: 131px; }
    .w151 { width: 151px; }
    .w71 { width: 71px; }
    .foot { display: flex; justify-content: center; margin-top: 6px; gap: 2px; flex: none; }
    .foot .btn { margin: 0; background: #efefef; }
    .oks { display: flex; justify-content: flex-end; gap: 5px; margin-top: 12px; padding-right: 6px; flex: none; }
    .ok { width: 60px; height: 28px; background: #6fb3cb; color: #fff; text-align: center; line-height: 28px; font-size: 15px; }
    .cancel { width: 60px; height: 28px; background: #e4e4e4; border: 1px solid #b0b0b0; text-align: center; line-height: 26px; font-size: 15px; }
    .bottom { height: 12px; border-top: 1px solid #c9c9c9; display: flex; justify-content: flex-end; padding: 3px 4px 0 0; overflow: hidden; flex: none; }
  `;

  private chev(up: boolean) {
    return html`<svg width="16" height="12" viewBox="0 0 16 12" aria-hidden="true"><path d=${up ? "M1.500 10L8 2.500 14.500 10" : "M1.500 2L8 9.500 14.500 2"} fill="none" stroke="#0b6f8c" stroke-width="2.800"/></svg>`;
  }

  private scene() {
    return svg`<svg class="scene" width="1447" height="793" viewBox="406 217 1447 793">
      <defs>
        <linearGradient id="bg" x1="0" y1="0" x2="0" y2="1"><stop offset="0" stop-color="#28292b"/><stop offset=".5" stop-color="#434446"/><stop offset="1" stop-color="#5a5b5d"/></linearGradient>
        <linearGradient id="cy" gradientUnits="userSpaceOnUse" x1="1345" y1="600" x2="1450" y2="612"><stop offset="0" stop-color="#6c7a80"/><stop offset=".45" stop-color="#4e5659"/><stop offset=".62" stop-color="#50585a"/><stop offset="1" stop-color="#717f84"/></linearGradient>
      </defs>
      <rect x="406" y="217" width="1447" height="793" fill="url(#bg)"/>
      <path d="M975 425L957 587 961 695 980 548z" fill="#7d6d3c" stroke="#b7a252"/>
      <path d="M980 548L1170 558 1153 707 961 695z" fill="#5a4f2b" stroke="#b7a252" stroke-width="1.200"/>
      <path d="M975 425L1166 436 1170 558 980 548z" fill="#00ffff" stroke="#00ff00" stroke-width="2" stroke-dasharray="2 2"/>
      <path d="M1358 537L1341 673C1340 692 1370 710 1394 710 1420 710 1435 697 1436 685L1453 543z" fill="url(#cy)" stroke="#2f3335"/>
      <ellipse cx="1406.500" cy="531.500" rx="48.500" ry="31" transform="rotate(8 1406.500 531.500)" fill="#00ffff" stroke="#00ff00" stroke-width="1.800" stroke-dasharray="2 3"/>
      <path d="M1176 527L1375 479" stroke="#ff0000" stroke-width="3.500" stroke-dasharray="8 8"/>
      <g stroke="#0000e6" stroke-width="3">
        <path d="M978 400L977 408M975 416L974 423" />
        <path d="M1173 528L1172 536M1171 544L1170 552"/>
        <path d="M1375 480L1374 488M1373 496L1372 504"/>
        <path d="M1445 525L1444 533M1443 542L1442 550"/>
      </g>
      <path d="M974 423v5M1372 504l-1 5" stroke="#f2b21a" stroke-width="3"/>
      <path d="M1170 552v6M1442 550v6" stroke="#f7cfe0" stroke-width="3"/>
      <path d="M961 669h40q2 0 2 2v26" fill="none" stroke="#d8d8d8" stroke-width=".8"/>
      <path d="M966 663h40q1 0 2 2v26" fill="none" stroke="#9c7060" stroke-width=".8"/>
      <path d="M961 695L971 625" stroke="#0a3ab0" stroke-width="2.500"/>
      <path d="M971 617l-4 15h8z" fill="#0a3ab0"/>
      <path d="M961 695l-2-60" stroke="#3f8f4a" stroke-width="2"/>
      <path d="M958 633l-4 15h8z" fill="#6a9a6a"/><path d="M968 632l-4 14h7z" fill="#7a5a50"/>
      <path d="M955 695H1045" stroke="#d43434" stroke-width="1.500" transform="rotate(3 955 695)"/>
      <path d="M961 690v13" stroke="#8a5a50"/>
      <path d="M1029 694l16 5-16 2z" fill="#b07060"/><path d="M1045 694l17 6-17 3z" fill="#f03a3a"/>
      <path d="M1048 695l6 6M1054 695l-6 6" stroke="#888"/>
      <text x="951" y="614" fill="#1a4ad8" font-family="Noto Sans" font-size="14">ZM</text>
      <text x="963" y="629" fill="#2e8a3e" font-family="Noto Sans" font-size="14">YM</text>
      <text x="1049" y="716" fill="#c03a3a" font-family="Noto Sans" font-size="14">XM</text>
      <path d="M473 927h25v13l-1 8h-24z" fill="#b4b4b4"/>
      <path d="M468 927h1v18h-1z" fill="#1a8a2a"/>
      <path d="M470 927h4l-1 18h-3z" fill="#0a30b0"/>
      <circle cx="470" cy="944" r="4" fill="#e6e6e6"/>
      <path d="M477 945h34" stroke="#d43434" stroke-width="2"/><path d="M495 943l17 3-17 3z" fill="#e03a3a"/>
      <path d="M515 942l7 9M522 942l-7 9" stroke="#b04040"/>
      <g transform="translate(1606 968)">
        ${blades.map((b) => svg`<path d="M0-41L35.500-20.500C37-8 30 0 18-9 10-27-8-34-18-30z" fill=${b[1]} stroke="#58585a" stroke-width=".6" transform="rotate(${b[0]})"/>`)}
        <path d="M0-41L35.500-20.500V20.500L0 41-35.500 20.500V-20.500z" fill="none" stroke="#58585a" stroke-width=".4"/>
        <path d="M0-19L16.500-9.500V9.500L0 19-16.500 9.500V-9.500z" fill="#58585a"/>
        <path d="M0-14L12-7 0 0-12-7z" fill="#7aa4bc"/><path d="M-12-7L0 0V14L-12 7z" fill="#5e92b0"/><path d="M12-7L0 0V14L12 7z" fill="#2f7ea9"/>
      </g>
      <text x="1649" y="977" fill="#a5a6a8" font-family="Liberation Sans" font-weight="700" font-size="47">3D</text>
      <text x="1714" y="976" fill="#a5a6a8" font-family="Noto Sans CJK SC" font-weight="700" font-size="38">世界网</text>
      <text x="1652" y="996" fill="#939496" font-family="Liberation Sans" font-weight="700" font-size="12.500" textLength="174">WWW.3DSJW.COM</text>
    </svg>`;
  }

  render() {
    const fbtn = (n: string, cls = "") => html`<div class="btn ${cls}">${ic(n)}</div>`;
    let prev = 24;
    return html`
      <div class="top">
        <div class="nx">NX</div>
        <div class="tops">
          ${topItems.map((t) => {
            const m = t[0] - prev;
            prev = t[0];
            return html`<span class="ti" style="margin-left:${m}px">${t[1]}</span>`;
          })}
        </div>
        <div class="title">NX 12.0.1.7 - 加工</div>
        <div class="siemens">SIEMENS</div>
        <div class="min"></div>
      </div>
      <div class="tabs">
        <div class="file">文件(F)</div>
        <div class="home">主页</div>
        <div class="sp"></div>
        <div class="search"><span>查找命令</span>${ic("search", 17)}</div>
        <div class="tbtns">${ic("frame", 18)}${ic("caret", 16)}${ic("help", 17)}${ic("pin", 15)}</div>
      </div>
      <div class="ribbon">
        <div class="grp g1">
          <div class="gb"><div class="doc">${ic("doc", 22)}${arrow}</div></div>
          <div class="gl"><span>操作</span><span class="ar"></span></div>
        </div>
        <div class="grp g2">
          <div class="gb">
            <div class="two">
              <div class="c">${ic("mill")}</div><div class="c">${ic("spath")}</div>
              <div class="c">${ic("verify")}</div><div class="c">${ic("sparkF")}</div>
            </div>
            <div class="big">${ic("bigCheck", 44)}${ic("bigMill", 44)}</div>
          </div>
        </div>
        <div class="grp g3">
          <div class="gb">
            <div class="cell"><span class="slot23">${ic("storch", 20)}</span>${arrow}</div>
            <div class="cell"><span class="slot23">${ic("colorsq", 20)}</span>${arrow}</div>
            <div class="cell"><span class="slot23">${ic("sF", 20)}</span></div>
            <div class="cell"><span class="slot23 on">${ic("cut", 18)}</span></div>
            <div class="cell"><span class="slot23">${ic("curve", 20)}</span></div>
            <div class="cell"><span class="slot23">${ic("holder", 20)}</span>${arrow}</div>
            <div class="cell"><span class="slot23 on">${ic("noncut", 18)}</span></div>
            <div class="cell"><span class="slot23">${ic("circle", 20)}</span></div>
            <div class="cell"><span class="slot23">${ic("line", 20)}</span>${arrow}</div>
          </div>
          <div class="gl"><span class="lab">显示</span><span class="ar"></span></div>
        </div>
        <div class="grp g4">
          <div class="gb">
            <div class="vb"><div class="pic">${ic("play", 22)}</div><div class="txt l">播放</div></div>
            <div class="vb"><div class="pic">${ic("pause", 20)}</div><div class="txt">暂停</div></div>
            <div class="mini">
              <div class="c">${ic("first", 18)}</div><div class="c">${ic("last", 18)}</div>
              <div class="c">${ic("stepb", 18)}</div><div class="c">${ic("stepf", 18)}</div>
              <div class="c">${ic("back", 16)}</div><div></div>
            </div>
            <div class="speed"><div class="combo"><span>8</span>${arrow}</div><div class="t">速度</div></div>
          </div>
          <div class="gl"><span class="lab">动画</span><span class="ar"></span></div>
        </div>
        <div class="grp g5">
          <div class="vb"><div class="pic">${ic("analysis", 34)}</div><div class="txt">分析</div>${arrow}</div>
        </div>
        <div class="grp g6">
          <div class="gb"><div class="two">
            <div class="cell">${ic("plusF")}${arrow}</div>
            <div class="cell">${ic("extrudeF")}${arrow}</div>
          </div></div>
          <div class="gl"><span class="lab">几何...</span><span class="ar"></span></div>
        </div>
        <div class="grp g7">
          <div class="gb"><div class="two">
            ${g7a.map((a, i) => html`<div class="cell"><span class="slot32">${ic(a[0])}</span>${a[1] ? arrow : ""}</div><div class="cell"><span class="slot32">${ic(g7b[i][0])}</span>${g7b[i][1] ? arrow : ""}</div>`)}
          </div></div>
          <div class="gl"><span class="lab">同步建模</span><span class="ar"></span></div>
        </div>
        <div class="grp g8">
          <div class="gb"><div class="two">
            ${g8a.map((n, i) => html`<div class="c">${ic(n)}</div><div class="c">${ic(g8b[i])}</div>`)}
          </div></div>
        </div>
      </div>
      <div class="sel">
        <span class="cell" style="width:27px"><span class="lead">${ic("part", 14)}</span><span class="ar"></span></span>
        <span class="vs"></span>
        <div class="scombo" style="width:167px;margin-left:12px"><span></span><span class="ar"></span></div>
        <div class="scombo" style="width:175px;margin:0 7px 0 9px"><span>整个装配</span><span class="ar"></span></div>
        ${selItems.map((s) => html`<span class="cell" style="width:${s[1]}px">${ic(s[0])}${s[2] ? arrow : ""}</span>`)}
        <span class="vs" style="margin-right:11px"></span>
        ${selItems2.map((s) => html`<span class="cell" style="width:${s[1]}px">${ic(s[0])}${s[2] ? arrow : ""}</span>`)}
        <span class="vs"></span>
      </div>
      <div class="main">
        <div class="side">
          <div class="sg s1">
            <svg class="i" width="15" height="166" viewBox="0 0 15 166" aria-hidden="true">${sideTop.map((p) => svg`<g transform="translate(0 ${p[0]})">${p[1]}</g>`)}</svg>
          </div>
          <div class="sw"><svg class="i" width="15" height="24" viewBox="0 0 15 24" aria-hidden="true"><path d="M0 3h7M0 6h5M4 9h8" stroke="#2a72c8"/><path d="M3 14v8h8l-3-5-2 1z" fill="none" stroke="#2a5ac8" stroke-width="1.300"/></svg></div>
          <div class="sg s2">
            <svg class="i" width="15" height="450" viewBox="0 0 15 450" aria-hidden="true">
              <g transform="translate(0 -8)"><path d="M0 22l9-7v14l-9 5z" fill="#e8a34a"/><path d="M0 26l14-4v9l-14 7z" fill="#2a8ad8"/><path d="M0 33h10" stroke="#eee"/></g>
              <g transform="translate(0 -17)"><path d="M0 70l6-3v6zM6 70l6-3v6" fill="#e23"/><path d="M0 78c5 0 8 2 8 8l4-2v10l-8 2-4-2z" fill="#ccc" stroke="#333"/></g>
              <g transform="translate(0 -18)"><path d="M0 118l8-3v20l-8 3z" fill="#3a9ad8"/><path d="M8 115l5-3v20l-5 3z" fill="#5ab05a"/></g>
              <g transform="translate(0 -25)"><path d="M0 175a14 14 0 0 1 14 14M0 170a18 18 0 0 1 14 6" fill="none" stroke="#2a8ad8" stroke-width="2"/><circle cx="0" cy="190" r="6" fill="#1a7ad0"/></g>
              <g transform="translate(0 -10)"><path d="M0 210h9l3 3v19H0z" fill="#fff" stroke="#2a5ac8"/><circle cx="2" cy="222" r="5" fill="#3aaa5a"/></g>
              <circle cx="3" cy="265" r="9.500" fill="#cfd8e8" stroke="#444" stroke-width="1.500"/><path d="M3 257v8h7" stroke="#222" fill="none" stroke-width="1.500"/>
              <path d="M0 302l4-1 8 16-3 2z" fill="#222"/>
              <path d="M0 345l12-5-8 5 8 6-3 4-5-6-4 3zM0 346h13" fill="#444" stroke="#5a8ac8" stroke-width=".7"/>
              <path d="M1 386c3-3 7-4 10-4-3 2-5 4-6 8l3 12H4zM0 398h4" fill="#888" stroke="#555" stroke-width=".7"/>
              <path d="M3 428l5-5h5l-2 6H3z" fill="#f2de7a" stroke="#4a9a4a" stroke-width=".7"/><path d="M0 434h12M6 434v10M0 444h10" stroke="#111" stroke-width="1.200" fill="none"/>
            </svg>
          </div>
        </div>
        <div class="nav">
          <div class="navt"><span>工序导航器 - 程序顺序</span><span class="maxi"></span></div>
          <div class="tbl">
            <div class="hdr"><div>名称</div><div><span class="clip">换刀</span></div><div><span class="clip">刀轨</span></div><div>刀具</div><div class="tc">时间</div></div>
            ${rows.map((r, i) => this.row(r, i))}
          </div>
          <div class="sb"><div class="sbi"><span class="tri-l"></span><span class="thumb">III</span><span class="tri-r"></span></div></div>
          <div class="acc"><span>相关性</span>${this.chev(false)}</div>
          <div class="acc"><span>细节</span>${this.chev(false)}</div>
        </div>
        <div class="work">
          <div class="strip"></div>
          ${this.scene()}
          <div class="dlg">
            <div class="dt"><svg width="16" height="16" viewBox="0 0 16 16" aria-hidden="true"><circle cx="8" cy="8" r="3.500" fill="none" stroke="#fff" stroke-width="2.600"/><circle cx="8" cy="8" r="6" fill="none" stroke="#fff" stroke-width="2" stroke-dasharray="2.400 2.300"/></svg><span class="n">Contour Area 1 - [CONTOUR_ARE...</span><svg width="12" height="12" viewBox="0 0 12 12" aria-hidden="true"><path d="M1 1l10 10M11 1L1 11" stroke="#fff" stroke-width="2"/></svg></div>
            <div class="sec s1st">
              <div class="sh"><span>几何体</span>${this.chev(true)}</div>
              <div class="fr f1"><span class="lb t4">几何体</span><div class="dd w131">MCS_MILL${arrow}</div>${fbtn("geoNew")}${fbtn("wrench")}</div>
              <div class="fr f2"><span class="lb">指定部件</span>${fbtn("part")}${fbtn("torch", "dash")}</div>
              <div class="fr"><span class="lb">指定检查</span>${fbtn("chk")}${fbtn("torchF", "f")}</div>
              <div class="fr"><span class="lb">指定切削区域</span>${fbtn("area")}${fbtn("torch")}</div>
              <div class="fr"><span class="lb">指定修剪边界</span>${fbtn("trim")}${fbtn("torchF", "f")}</div>
              <div class="fr"><span class="lb">切削区域</span>${fbtn("region")}${fbtn("torchF", "f")}</div>
              <div class="hr"></div>
            </div>
            <div class="plain tool"><span class="lb t4">刀具</span><div class="dd">D14 (铣刀-5 参${arrow}</div>${fbtn("toolNew", "g")}${fbtn("toolW", "g")}</div>
            <div class="sec s2nd">
              <div class="sh"><span>驱动方法</span>${this.chev(true)}</div>
              <div class="fr f3"><span class="lb t5">方法</span><div class="dd w151">区域铣削${arrow}</div>${fbtn("wrench")}</div>
            </div>
            <div class="gap6"></div>
            <div class="plain"><span class="lb">切削参数</span>${fbtn("cut", "g")}</div>
            <div class="plain"><span class="lb">非切削移动</span>${fbtn("noncut", "g")}</div>
            <div class="plain"><span class="lb">进给率和速度</span>${fbtn("feeds", "g")}</div>
            <div class="rule"></div>
            <div class="plain h26"><span class="lb t3">部件余量</span><div class="num">0. 0400</div><div class="lockb">${ic("lock", 18)}</div></div>
            <div class="plain chkrow"><span class="ck">${ic("chkbox", 16)}</span><span>在边上延伸</span></div>
            <div class="plain h28"><span class="lb t4">距离</span><div class="num mr">0. 0500</div><div class="dd w71">mm${arrow}</div></div>
            <div class="sec s27"><div class="sh"><span>机床控制</span>${this.chev(false)}</div></div>
            <div class="sec s27 mt4"><div class="sh"><span>选项</span>${this.chev(false)}</div></div>
            <div class="foot">${fbtn("mill", "g")}${fbtn("spath", "g")}${fbtn("verify", "g")}${fbtn("doc2", "g")}</div>
            <div class="oks"><div class="ok">确定</div><div class="cancel">取消</div></div>
          </div>
        </div>
      </div>
      <div class="bottom">${ic("frame", 16)}</div>
    `;
  }

  private row(r: Row, i: number) {
    const alt = i % 2 === 0;
    const x0 = r.l !== undefined ? 29 + 19 * (r.l - 1) - 23 : r.pad ?? 0;
    const empty = !r.t;
    const body = empty
      ? ""
      : html`
          ${r.g ? svg`<svg class="guides" viewBox="0 0 245 24" aria-hidden="true">${r.g}</svg>` : ""}
          ${r.l !== undefined ? (r.exp ? html`<span class="box ${r.exp === "+" ? "plus" : ""}"></span>` : html`<span class="bs"></span>`) : ""}
          ${r.mark ? html`<span class="mk">${r.mark === "bulb" ? html`<svg width="10" height="16" viewBox="0 0 10 16" class="i" aria-hidden="true"><g transform="translate(0 1)">${I.bulb}</g></svg>` : html`<svg width="12" height="14" viewBox="0 0 12 14" class="i" aria-hidden="true">${I.okg}</svg>`}</span>` : ""}
          ${r.kind === "folder" ? html`<span class="kd"><svg width="14" height="16" viewBox="0 0 14 16" class="i" aria-hidden="true">${I.folder}</svg></span>` : ""}
          ${r.kind === "op" ? html`<span class="kd"><svg width="14" height="16" viewBox="0 0 14 16" class="i" aria-hidden="true">${I.op}</svg></span>` : ""}
          <span class="nm ${r.sel ? "sel2" : ""}">${r.t}</span>
        `;
    return html`<div class="row ${alt ? "" : "alt"}">
      <div style="padding-left:${x0}px">${body}</div>
      <div class="ctr ${r.sel ? "on2" : ""}">${r.sel ? html`<svg width="8" height="14" viewBox="0 0 8 14" aria-hidden="true">${I.hatchV}</svg>` : ""}</div>
      <div class="ctr ${r.sel ? "on2" : ""}">${r.sel ? html`<svg width="12" height="14" viewBox="0 0 12 14" aria-hidden="true">${I.okg}</svg>` : ""}</div>
      <div class="tl ${r.sel ? "on2" : ""}">${r.sel ? "D14" : ""}</div>
      <div class="tm ${r.sel ? "on2" : ""}">${r.time ?? ""}</div>
    </div>`;
  }
}
